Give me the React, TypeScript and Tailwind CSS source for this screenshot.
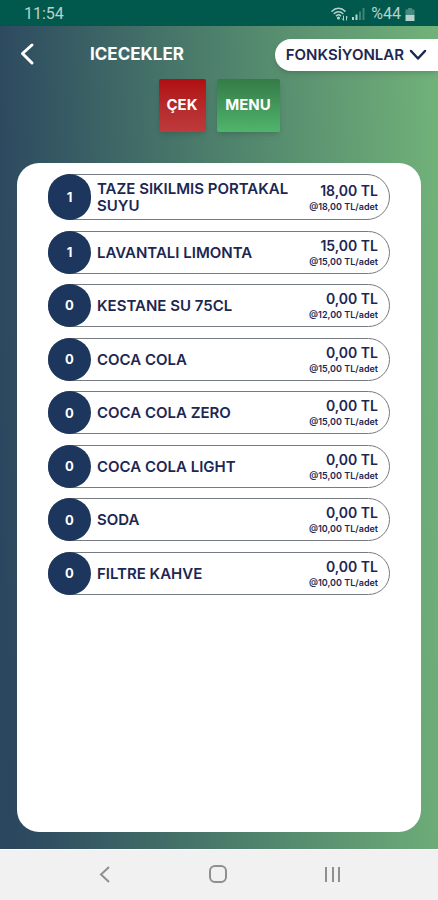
interface Product {
  name: string;
  count: number;
  total: string;
  unitPrice: string;
}

const products: Product[] = [
  { name: "TAZE SIKILMIS PORTAKAL SUYU", count: 1, total: "18,00 TL", unitPrice: "18,00" },
  { name: "LAVANTALI LIMONTA", count: 1, total: "15,00 TL", unitPrice: "15,00" },
  { name: "KESTANE SU 75CL", count: 0, total: "0,00 TL", unitPrice: "12,00" },
  { name: "COCA COLA", count: 0, total: "0,00 TL", unitPrice: "15,00" },
  { name: "COCA COLA ZERO", count: 0, total: "0,00 TL", unitPrice: "15,00" },
  { name: "COCA COLA LIGHT", count: 0, total: "0,00 TL", unitPrice: "15,00" },
  { name: "SODA", count: 0, total: "0,00 TL", unitPrice: "10,00" },
  { name: "FILTRE KAHVE", count: 0, total: "0,00 TL", unitPrice: "10,00" },
];

function StatusBar() {
  return (
    <div className="flex h-[26px] items-center justify-between bg-[#00594c] pl-6 pr-[23px] pt-[2px] font-[Roboto,sans-serif] text-base text-[#b5d3cc]">
      <span>11:54</span>
      <div className="flex items-center">
        <svg width="17" height="14" viewBox="0 0 17 14" fill="none" stroke="currentColor" strokeWidth="1.5" strokeLinecap="round">
          <path d="M1 4.2C4.6.4 10.4.4 14 4.2M3.2 6.5c2.4-2.4 6.200-2.4 8.600 0M5.400 8.800c1.200-1.200 3-1.200 4.200 0" />
          <circle cx="7.5" cy="11" r="0.8" fill="currentColor" />
          <path d="M12.500 9v4M11.200 11.800l1.300 1.300M15.500 13V9.500M15.500 9.300l1 1" strokeWidth="1" />
        </svg>
        <svg className="ml-1" width="13" height="12" viewBox="0 0 13 12" fill="currentColor">
          <path d="M0 9h2v3H0zM3.5 6.500h2V12h-2z" />
          <path d="M7 3.5h2V12H7zM10.5 0h2v12h-2z" opacity="0.35" />
        </svg>
        <span className="ml-[6px]">%44</span>
        <svg className="ml-1" width="10" height="13" viewBox="0 0 10 13" fill="currentColor">
          <path d="M3 0h4v1.5h2.500V7h-9V1.500H3z" opacity="0.4" />
          <path d="M.5 7h9v6h-9z" />
        </svg>
      </div>
    </div>
  );
}

function ProductRow({ product }: { product: Product }) {
  return (
    <li className="flex min-h-[43px] items-stretch rounded-full border border-[#777b83] bg-white">
      <div className="-my-px -ml-px flex w-[43px] shrink-0 items-center justify-center rounded-full bg-[#1c365d] pt-px text-[13px] font-bold text-white">
        {product.count}
      </div>
      <div className="flex flex-1 items-center py-[5px] pl-[6px] text-[15px] leading-[17px] font-semibold">
        {product.name}
      </div>
      <div className="flex shrink-0 flex-col justify-center pt-px pr-[11px] text-right">
        <span className="text-sm leading-[18px] font-semibold">{product.total}</span>
        <span className="text-[9px] leading-[14px] font-semibold">@{product.unitPrice} TL/adet</span>
      </div>
    </li>
  );
}

export default function App() {
  return (
    <div className="flex min-h-screen flex-col font-[Inter,sans-serif] text-[#1c2752]">
      <StatusBar />
      <div className="flex flex-1 flex-col bg-linear-[88deg,#2b475f_3%,#4c7e6b_50%,#70b079_98%] pb-[17px]">
        <header className="flex items-center pt-[13px]">
          <button aria-label="Geri" className="ml-[19px] text-white">
            <svg width="16" height="26" viewBox="0 0 16 26" fill="none" stroke="currentColor" strokeWidth="3" strokeLinecap="round" strokeLinejoin="round">
              <path d="M13 3 3.5 11.500 13 21" />
            </svg>
          </button>
          <h1 className="ml-[55px] flex-1 text-[17px] font-bold text-white">ICECEKLER</h1>
          <button className="flex h-8 items-center gap-[5px] rounded-l-full bg-white pr-[11px] pl-[11px] text-[15px] font-semibold shadow-md">
            FONKSİYONLAR
            <svg width="18" height="12" viewBox="0 0 18 12" fill="none" stroke="currentColor" strokeWidth="2.5" strokeLinecap="round" strokeLinejoin="round">
              <path d="M2 2l7 7.500L16 2" />
            </svg>
          </button>
        </header>
        <div className="mt-2 flex justify-center gap-[11px] text-[15px] font-bold text-white">
          <button className="h-[53px] w-[47px] rounded-xs bg-linear-to-b from-[#b00d10] to-[#bd3a3d] shadow-md">ÇEK</button>
          <button className="h-[53px] w-[63px] rounded-xs bg-linear-to-b from-[#357b48] to-[#4fb56b] shadow-md">MENU</button>
        </div>
        <main className="mx-[17px] mt-[31px] flex-1 rounded-[22px] bg-white px-[31px] pt-[11px] pb-6">
          <ul className="flex min-h-[421px] flex-col justify-between">
            {products.map((product) => (
              <ProductRow key={product.name} product={product} />
            ))}
          </ul>
        </main>
      </div>
      <nav className="flex h-[51px] items-center justify-around border-t border-white bg-[#f1f1f1] px-12 text-[#8f8f8f]">
        <button aria-label="Geri git">
          <svg width="18" height="20" viewBox="0 0 18 20" fill="none" stroke="currentColor" strokeWidth="2">
            <path d="M13 2 5 9.500l8 7.500" />
          </svg>
        </button>
        <button aria-label="Ana ekran">
          <svg width="20" height="20" viewBox="0 0 20 20" fill="none" stroke="currentColor" strokeWidth="2">
            <rect x="1" y="1" width="16" height="16" rx="5" />
          </svg>
        </button>
        <button aria-label="Son uygulamalar">
          <svg width="18" height="20" viewBox="0 0 18 20" fill="none" stroke="currentColor" strokeWidth="2">
            <path d="M2 2v15M9 2v15M15 2v15" />
          </svg>
        </button>
      </nav>
    </div>
  );
}
